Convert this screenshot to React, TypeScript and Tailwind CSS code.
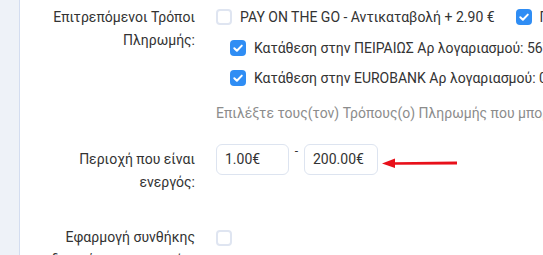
import React from "react";

function Box({ checked }: { checked?: boolean }) {
  if (checked) {
    return (
      <span className="w-[16px] h-[16px] rounded-[4px] bg-[#2f8df4] flex items-center justify-center shrink-0">
        <svg width="12" height="12" viewBox="0 0 12 12" fill="none">
          <path d="M2.3 6.2 L4.9 8.7 L9.8 3.6" stroke="white" strokeWidth="2" strokeLinecap="round" strokeLinejoin="round" />
        </svg>
      </span>
    );
  }
  return <span className="block w-[16px] h-[16px] rounded-[4px] border-2 border-[#dfe5f1] bg-white shrink-0" />;
}

function Item({ checked, label }: { checked?: boolean; label: string }) {
  return (
    <div className="flex items-center gap-[8px] whitespace-nowrap shrink-0">
      <Box checked={checked} />
      <span>{label}</span>
    </div>
  );
}

export default function App() {
  return (
    <div
      className="w-[543px] h-[255px] overflow-hidden flex bg-white text-[14px] text-[#333333]"
      style={{ fontFamily: "Roboto, 'Noto Sans', sans-serif" }}
    >
      <div className="w-[20px] shrink-0 bg-[#eef2f8] border-r border-[#d3ddf0]" />
      <div className="flex-1 min-w-0 flex flex-col">
        {/* Row 1 */}
        <div className="flex">
          <div className="w-[175px] shrink-0 text-right leading-[23px] pt-[6px]">
            Επιτρεπόμενοι Τρόποι
            <br />
            Πληρωμής:
          </div>
          <div className="ml-[21px] min-w-0 flex flex-col pt-[9px]">
            <div className="flex gap-[21px] h-[16px] items-center">
              <Item label="PAY ON THE GO - Αντικαταβολή + 2.90 €" />
              <Item checked label="Πληρωμή με κάρτα" />
            </div>
            <div className="flex h-[16px] items-center pl-[14px] mt-[15px]">
              <Item checked label="Κατάθεση στην ΠΕΙΡΑΙΩΣ Αρ λογαριασμού: 5678 0123 4567" />
            </div>
            <div className="flex h-[16px] items-center pl-[14px] mt-[14px]">
              <Item checked label="Κατάθεση στην EUROBANK Αρ λογαριασμού: 0026 0123 4567" />
            </div>
            <div className="whitespace-nowrap text-[#8c8c8c] mt-[17px] leading-[20px]">
              Επιλέξτε τους(τον) Τρόπους(ο) Πληρωμής που μπορούν να χρησιμοποιηθούν
            </div>
          </div>
        </div>

        {/* Row 2 */}
        <div className="flex mt-[21px]">
          <div className="w-[175px] shrink-0 text-right leading-[23px] pt-[4px]">
            Περιοχή που είναι
            <br />
            ενεργός:
          </div>
          <div className="ml-[21px] flex items-start">
            <div className="w-[73px] h-[31px] rounded-[6px] border border-[#dde4f0] flex items-center px-[8px]">
              1.00€
            </div>
            <span className="w-[15px] text-center text-[12px] leading-[14px]">-</span>
            <div className="w-[74px] h-[31px] rounded-[6px] border border-[#dde4f0] flex items-center px-[8px]">
              200.00€
            </div>
            <svg width="80" height="12" viewBox="0 0 80 12" className="mt-[13px] ml-[3px]">
              <path d="M12 5.2 L76 4.6 L76 7.4 L12 7.8 Z" fill="#e8101a" />
              <polygon points="1,6.5 14,1.5 14,11" fill="#e8101a" />
            </svg>
          </div>
        </div>

        {/* Row 3 */}
        <div className="flex mt-[32px]">
          <div className="w-[175px] shrink-0 text-right leading-[23px]">
            Εφαρμογή συνθήκης
            <br />
            δωρεάν μεταφορικών:
          </div>
          <div className="ml-[21px] pt-[4px]">
            <Box />
          </div>
        </div>
      </div>
    </div>
  );
}
